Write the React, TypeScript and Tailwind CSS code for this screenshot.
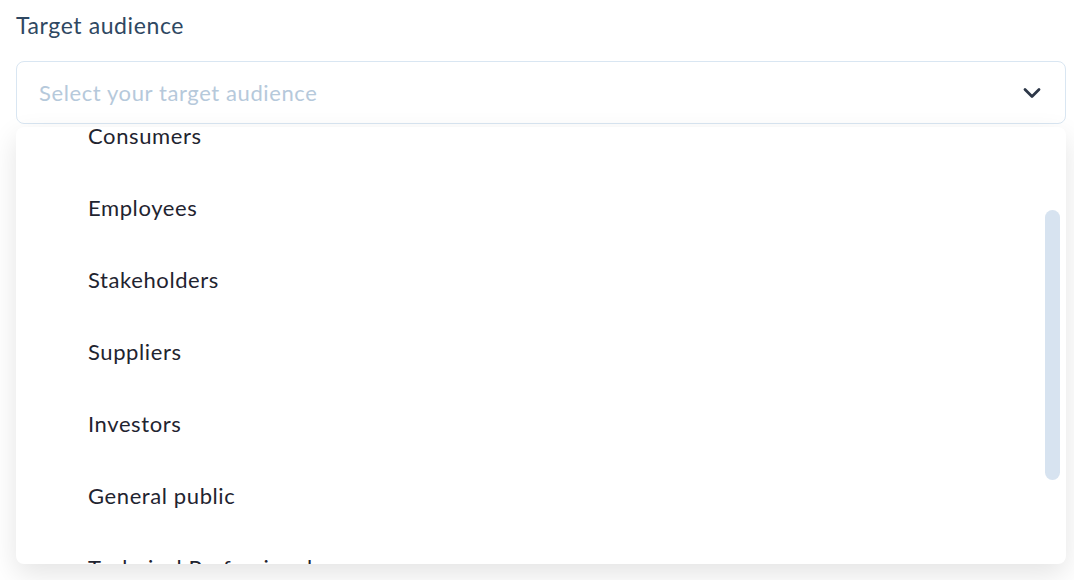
import { ChevronDown } from 'lucide-react';

const options = [
  'Consumers',
  'Employees',
  'Stakeholders',
  'Suppliers',
  'Investors',
  'General public',
  'Technical Professionals',
  'Students',
];

export default function App() {
  return (
    <div className="h-[580px] overflow-hidden bg-white pl-4 pr-2 pt-[10px] font-['Lato',sans-serif] tracking-[0.6px]">
      <label className="block text-[23px] leading-[30px] text-[#2f4862]">Target audience</label>

      <div className="relative mt-[21px]">
        {/* select trigger */}
        <div className="flex h-[63px] items-center justify-between rounded-lg border border-[#d9e6f2] bg-white pl-[22px] pr-[19px]">
          <span className="text-[22px] text-[#b6c9db]">Select your target audience</span>
          <ChevronDown className="h-7 w-7 text-[#2d3748]" strokeWidth={2.4} />
        </div>

        {/* field underneath the menu */}
        <div className="mt-[200px] h-[200px] rounded-lg border border-[#d9e6f2]" />

        {/* open menu */}
        <div className="absolute left-0 right-0 top-[66px] h-[437px] overflow-hidden rounded-lg bg-white shadow-[0_10px_28px_rgba(0,0,0,0.11)]">
          <ul className="-mt-[28px]">
            {options.map((o) => (
              <li key={o} className="flex h-[72px] items-center pl-[72px] text-[22px] text-[#1f2430]">
                {o}
              </li>
            ))}
          </ul>
          <div className="absolute right-[6px] top-[83px] h-[270px] w-[15px] rounded-full bg-[#d7e3f0]" />
        </div>
      </div>
    </div>
  );
}
